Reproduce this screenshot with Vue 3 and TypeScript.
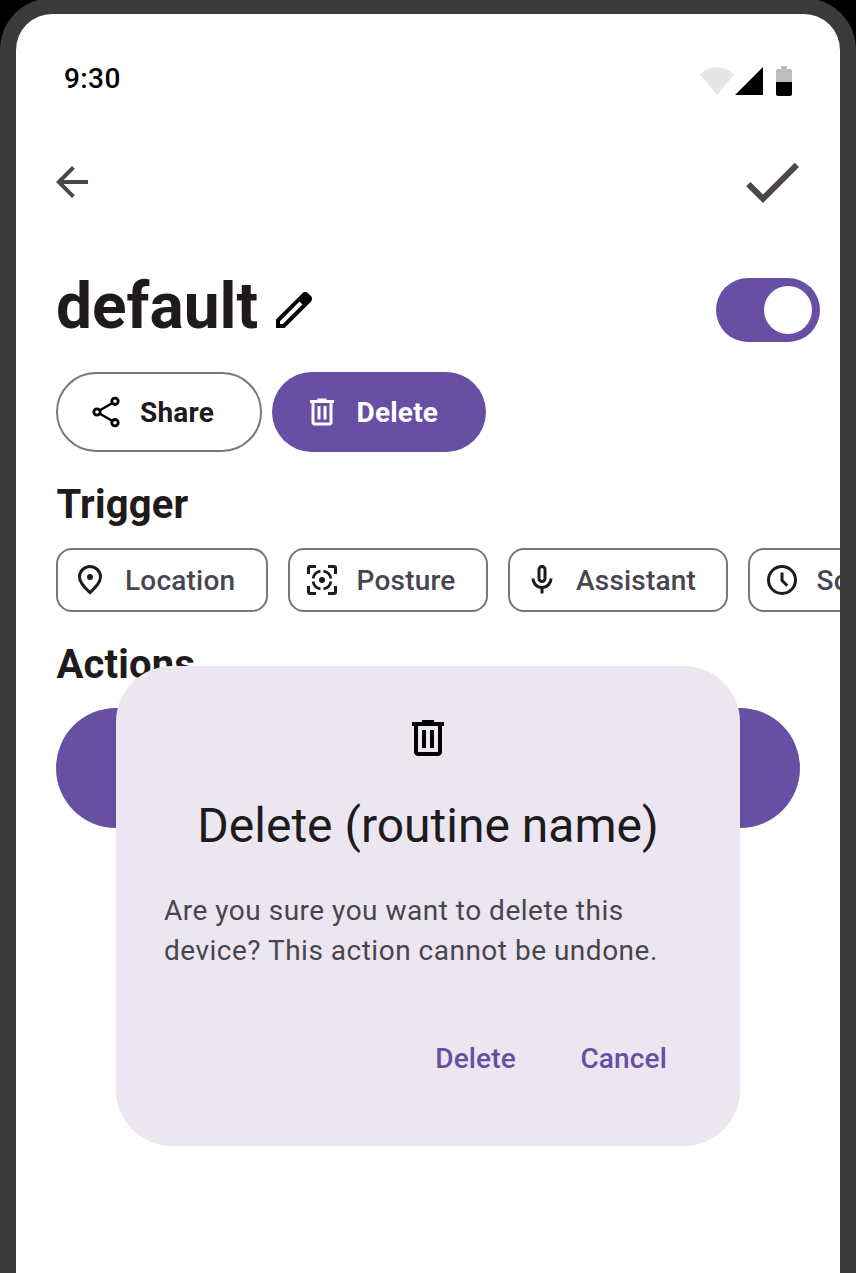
<script setup lang="ts">
import { ref } from 'vue'

interface Chip {
  id: 'location' | 'posture' | 'assistant' | 'schedule'
  label: string
}

const chips: Chip[] = [
  { id: 'location', label: 'Location' },
  { id: 'posture', label: 'Posture' },
  { id: 'assistant', label: 'Assistant' },
  { id: 'schedule', label: 'Schedule' },
]

const enabled = ref(true)
const trashPath =
  'M7 21q-.825 0-1.412-.587T5 19V6H4V4h5V3h6v1h5v2h-1v13q0 .825-.587 1.413T17 21ZM17 6H7v13h10ZM9 17h2V8H9Zm4 0h2V8h-2Z'
</script>

<template>
  <div class="stage">
    <div class="device">
      <main class="screen">
        <header class="status">
          <span class="time">9:30</span>
          <svg class="status-icons" viewBox="0 0 92 30" aria-hidden="true">
            <path d="M0 8.5Q7 1 17 1t17 7.500L17 29Z" fill="#e6e6e6" />
            <path d="M63 1v28H35Z" />
            <path d="M76 16V5q0-2 2-2h3V0h6v3h3q2 0 2 2v11Z" fill="#bdbdbd" />
            <path d="M76 16h16v12q0 2-2 2H78q-2 0-2-2Z" />
          </svg>
        </header>

        <nav class="appbar">
          <button class="plain" aria-label="Back">
            <svg class="back" viewBox="0 0 16 16"><path d="M16 7H3.830l5.590-5.590L8 0 0 8l8 8 1.410-1.410L3.830 9H16Z" /></svg>
          </button>
          <button class="plain" aria-label="Save">
            <svg class="check" viewBox="0 0 24 24"><path d="M9 16.170 4.830 12l-1.420 1.410L9 19 21 7l-1.410-1.410Z" /></svg>
          </button>
        </nav>

        <section class="heading">
          <h1>default</h1>
          <svg class="edit" viewBox="0 0 24 24" aria-hidden="true">
            <path d="M5 19h1.425L16.2 9.225 14.775 7.8 5 17.575V19Zm-2 2v-4.25L16.2 3.575q.3-.275.663-.425t.762-.15q.4 0 .775.15t.65.45L20.425 5q.3.275.438.65T21 6.4q0 .4-.138.763t-.437.662L7.25 21H3Z" />
          </svg>
          <button class="switch" :class="{ on: enabled }" role="switch" :aria-checked="enabled" @click="enabled = !enabled">
            <span class="knob"></span>
          </button>
        </section>

        <div class="actions-row">
          <button class="pill outlined">
            <svg class="icon" viewBox="0 0 36 36" fill="none" stroke="#000" stroke-width="2.8">
              <circle cx="27" cy="7.300" r="3.200" /><circle cx="9" cy="18" r="3.200" /><circle cx="27" cy="28.700" r="3.200" />
              <path d="m12 16.300 12-7.100M12 19.700l12 7.100" stroke-width="2.400" />
            </svg>
            Share
          </button>
          <button class="pill filled">
            <svg class="icon" viewBox="0 0 24 24" fill="#fff"><path :d="trashPath" /></svg>
            Delete
          </button>
        </div>

        <h2>Trigger</h2>
        <div class="chips">
          <button v-for="chip in chips" :key="chip.id" class="chip" :class="chip.id">
            <svg v-if="chip.id === 'location'" class="icon" viewBox="0 0 36 36" fill="none" stroke="#1d1b20" stroke-width="3">
              <path d="M18 30.600C11 24.300 7.500 19.400 7.500 15a10.500 10.500 0 0 1 21 0C28.500 19.400 25 24.300 18 30.600Z" />
              <circle cx="18" cy="15" r="3" fill="#1d1b20" stroke="none" />
            </svg>
            <svg v-else-if="chip.id === 'posture'" class="icon" viewBox="0 0 36 36" fill="none" stroke="#1d1b20" stroke-width="3">
              <path d="M4.500 12V6q0-1.500 1.500-1.500h6M24 4.500h6q1.500 0 1.500 1.500v6M31.500 24v6q0 1.500-1.500 1.500h-6M12 31.500H6q-1.500 0-1.500-1.500v-6" />
              <path d="M19.500 9.100A9 9 0 0 1 26.900 16.500M26.900 19.500A9 9 0 0 1 19.500 26.900M16.500 26.900A9 9 0 0 1 9.100 19.500M9.100 16.500A9 9 0 0 1 16.500 9.100" stroke-width="2.700" />
              <circle cx="18" cy="18" r="3" fill="#1d1b20" stroke="none" />
            </svg>
            <svg v-else-if="chip.id === 'assistant'" class="icon" viewBox="0 0 24 24" fill="#1d1b20">
              <path d="M12 14q-1.250 0-2.125-.875T9 11V5q0-1.250.875-2.125T12 2q1.250 0 2.125.875T15 5v6q0 1.250-.875 2.125T12 14Zm-1 7v-3.075q-2.600-.350-4.300-2.325T5 11h2q0 2.075 1.463 3.538T12 16q2.075 0 3.538-1.463T17 11h2q0 2.625-1.700 4.600T13 17.925V21Zm1-9q.425 0 .713-.287T13 11V5q0-.425-.287-.712T12 4q-.425 0-.712.288T11 5v6q0 .425.288.713T12 12Z" />
            </svg>
            <svg v-else class="icon" viewBox="0 0 36 36" fill="none" stroke="#1d1b20" stroke-width="3">
              <circle cx="18" cy="18" r="13.500" />
              <path d="M18 10.500v8l5.300 5.300" />
            </svg>
            {{ chip.label }}
          </button>
        </div>

        <h2>Actions</h2>
        <div class="add-action"></div>

        <div class="dialog" role="dialog">
          <svg class="dialog-icon" viewBox="0 0 24 24"><path :d="trashPath" /></svg>
          <h3>Delete (routine name)</h3>
          <p>Are you sure you want to delete this device? This action cannot be undone.</p>
          <footer>
            <button class="text-button">Delete</button>
            <button class="text-button">Cancel</button>
          </footer>
        </div>
      </main>
    </div>
  </div>
</template>

<style>
body {
  background: #000;
}
</style>

<style scoped>
* {
  box-sizing: border-box;
}
.stage {
  height: 1273px;
  overflow: hidden;
  background: #000;
  font-family: Roboto, "Liberation Sans", sans-serif;
}
.device {
  height: 1400px;
  margin-top: -2px;
  padding: 16px 16px 0;
  border-radius: 52px 52px 0 0;
  background: #3b3b3b;
}
.screen {
  position: relative;
  height: 100%;
  overflow: hidden;
  border-radius: 36px 36px 0 0;
  background: #fff;
  color: #1f1a1b;
}
button {
  padding: 0;
  border: 0;
  background: none;
  font: inherit;
  color: inherit;
}
svg {
  display: block;
  flex: none;
}
h1,
h2,
h3,
p {
  margin: 0;
}
.status {
  display: flex;
  justify-content: space-between;
  height: 104px;
  padding: 52px 48px 0;
  color: #000;
}
.time {
  font-size: 28px;
  font-weight: 500;
  line-height: 26px;
  letter-spacing: 0.4px;
}
.status-icons {
  width: 92px;
  height: 30px;
}
.appbar {
  display: flex;
  align-items: center;
  justify-content: space-between;
  height: 128px;
  padding: 0 32px 0 40px;
  fill: #4d444c;
}
.back {
  width: 32px;
  height: 32px;
}
.check {
  width: 72px;
  height: 72px;
}
.heading {
  display: flex;
  align-items: center;
  height: 100px;
  margin-top: 14px;
  padding: 0 20px 0 40px;
}
h1 {
  width: 214px;
  font-size: 64px;
  line-height: 80px;
  font-weight: 700;
}
.heading h1 {
  margin-top: -6px;
}
.edit {
  width: 48px;
  height: 48px;
}
.switch {
  display: flex;
  width: 104px;
  height: 64px;
  margin-left: auto;
  padding: 8px;
  border-radius: 32px;
  background: #79747e;
}
.switch.on {
  justify-content: flex-end;
  background: #6750a4;
}
.knob {
  width: 48px;
  height: 48px;
  border-radius: 50%;
  background: #fff;
}
.actions-row {
  display: flex;
  gap: 10px;
  padding: 12px 40px 0;
}
.pill {
  display: flex;
  align-items: center;
  gap: 16px;
  height: 80px;
  border-radius: 40px;
  font-size: 28px;
  font-weight: 700;
  letter-spacing: 0.2px;
}
.outlined {
  width: 206px;
  padding-left: 30px;
  border: 2px solid #7f747a;
}
.filled {
  width: 214px;
  padding-left: 32px;
  gap: 16.5px;
  background: #6750a4;
  color: #fff;
}
.icon {
  width: 36px;
  height: 36px;
}
h2 {
  height: 48px;
  margin-top: 28px;
  padding: 1px 0 0 40.5px;
  font-size: 40px;
  line-height: 48px;
  font-weight: 700;
  letter-spacing: 0.15px;
}
.chips {
  display: flex;
  gap: 20px;
  margin-top: 20px;
  padding-left: 40px;
}
.chip {
  display: flex;
  flex: none;
  align-items: center;
  gap: 16px;
  height: 64px;
  padding-left: 14px;
  border: 2px solid #79747e;
  border-radius: 16px;
  color: #49454f;
  font-size: 28px;
  font-weight: 500;
  letter-spacing: 0.2px;
}
.location {
  width: 212px;
  gap: 17px;
}
.posture {
  width: 200px;
  gap: 16.6px;
}
.assistant,
.schedule {
  width: 220px;
}
.schedule {
  gap: 16.5px;
}
.add-action {
  width: 744px;
  height: 120px;
  margin: 20px 0 0 40px;
  border-radius: 60px;
  background: #6750a4;
}
/* Modal surface floating above the routine page */
.dialog {
  position: absolute;
  top: 652px;
  left: 100px;
  display: flex;
  flex-direction: column;
  align-items: center;
  width: 624px;
  height: 480px;
  padding: 48px;
  border-radius: 56px;
  background: #ece6f0;
}
.dialog-icon {
  width: 48px;
  height: 48px;
}
h3 {
  margin-top: 32px;
  color: #1d1b20;
  font-size: 48px;
  line-height: 64px;
  font-weight: 400;
}
p {
  align-self: stretch;
  margin-top: 33px;
  color: #49454f;
  font-size: 28px;
  line-height: 40px;
  letter-spacing: 0.5px;
}
footer {
  display: flex;
  align-self: stretch;
  justify-content: flex-end;
  gap: 16.5px;
  margin-top: 47px;
  padding-right: 1px;
}
.text-button {
  height: 80px;
  padding: 0 24px;
  color: #6750a4;
  font-size: 28px;
  font-weight: 500;
  letter-spacing: 0.15px;
}
</style>
